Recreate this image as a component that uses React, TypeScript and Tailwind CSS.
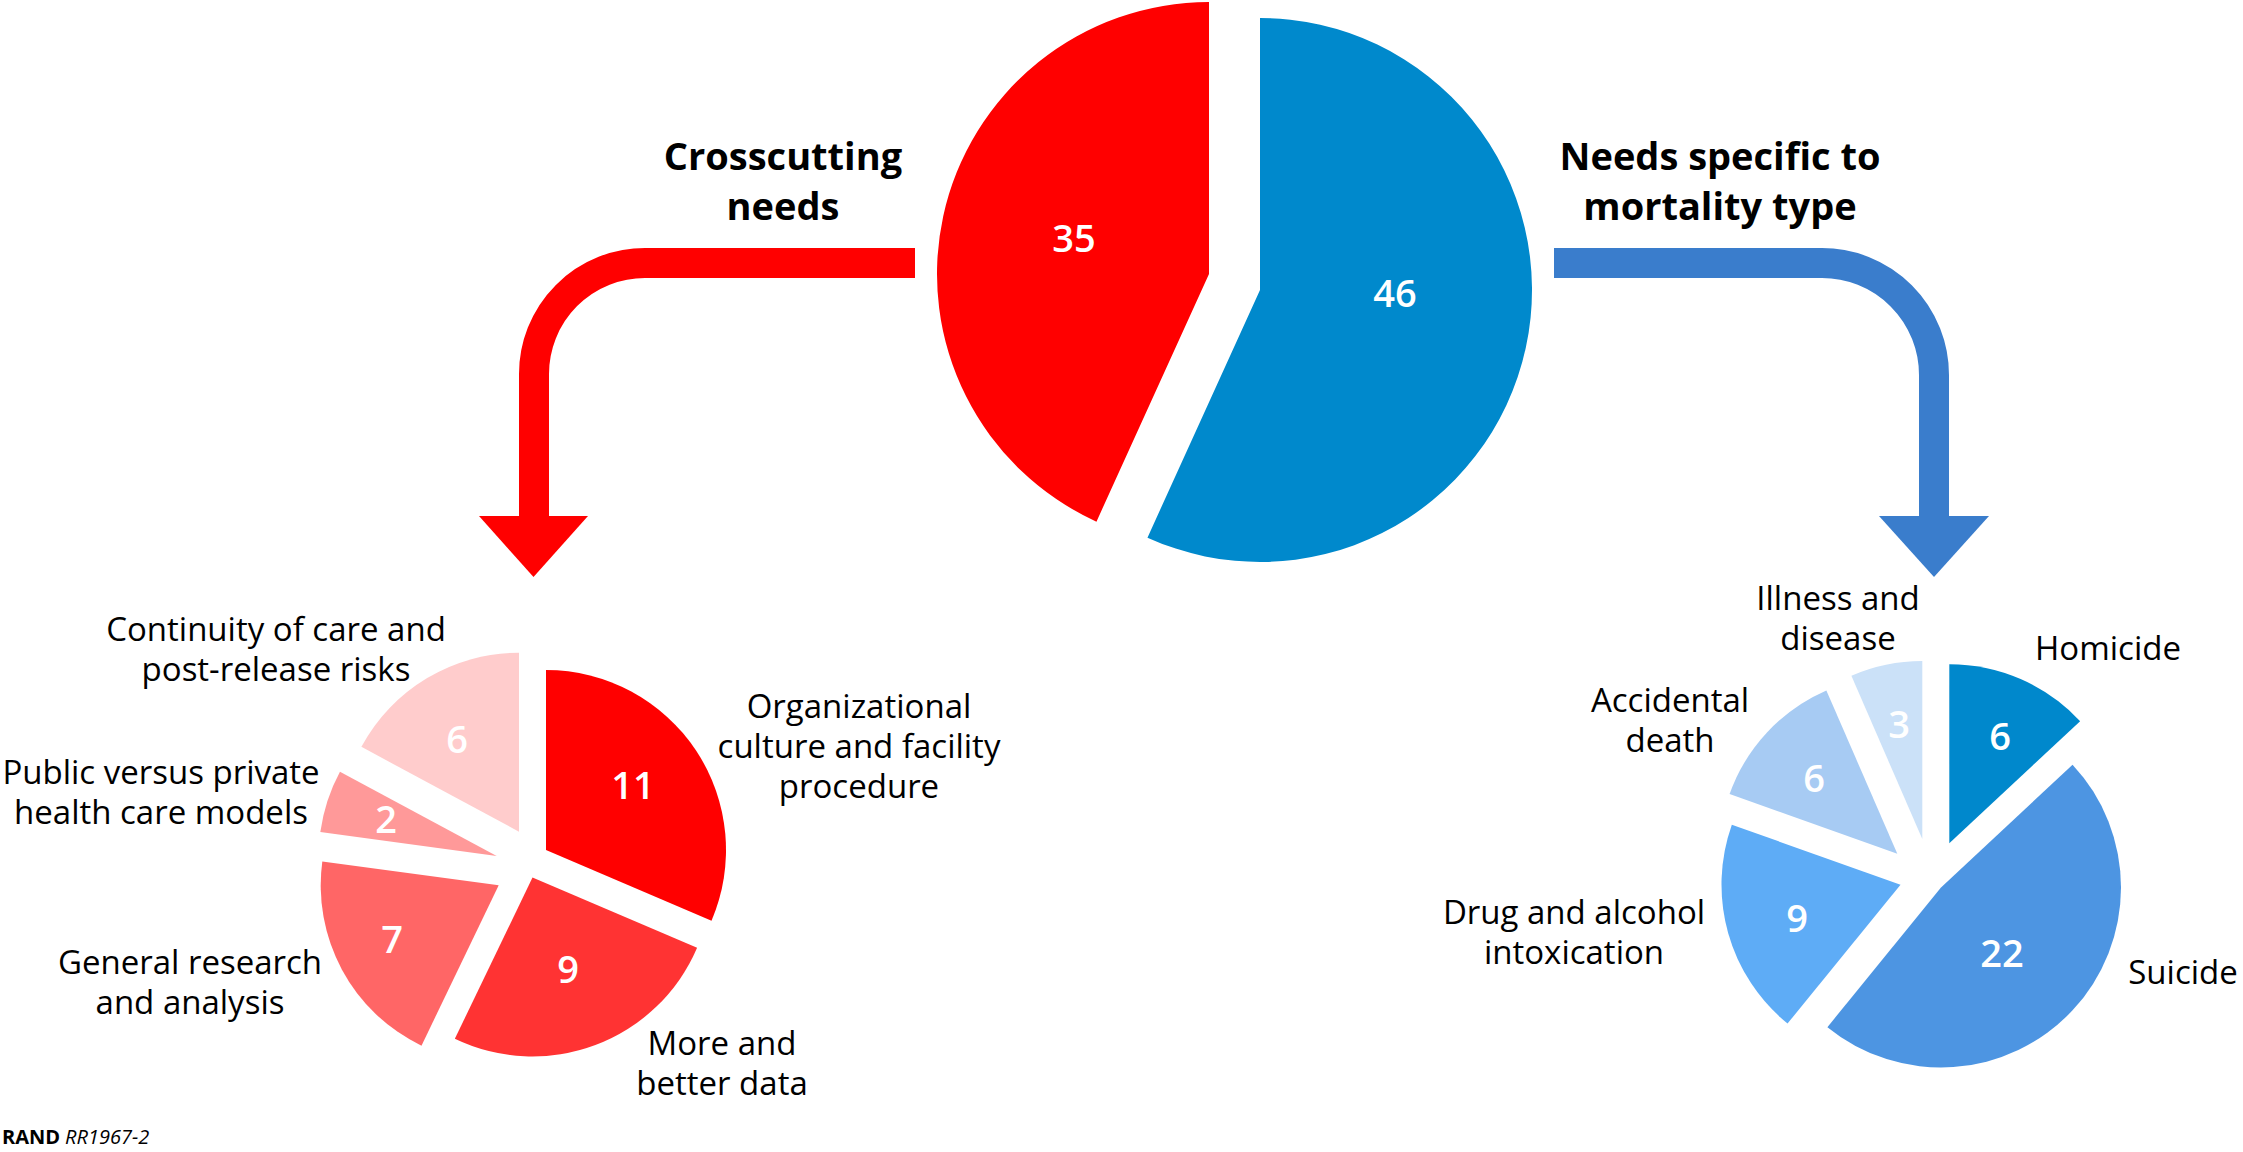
import React from "react";

type Slice = { cx: number; cy: number; r: number; a0: number; a1: number; fill: string };

function slicePath(s: Slice) {
  const rad = (d: number) => (d * Math.PI) / 180;
  const x0 = s.cx + s.r * Math.sin(rad(s.a0));
  const y0 = s.cy - s.r * Math.cos(rad(s.a0));
  const x1 = s.cx + s.r * Math.sin(rad(s.a1));
  const y1 = s.cy - s.r * Math.cos(rad(s.a1));
  const large = s.a1 - s.a0 > 180 ? 1 : 0;
  return `M ${s.cx} ${s.cy} L ${x0} ${y0} A ${s.r} ${s.r} 0 ${large} 1 ${x1} ${y1} Z`;
}

const slices: Slice[] = [
  // main pie
  { cx: 1209, cy: 274, r: 272, a0: 204.44, a1: 360, fill: "#ff0000" },
  { cx: 1260, cy: 290, r: 272, a0: 0, a1: 204.44, fill: "#0089cc" },
  // left pie (35)
  { cx: 546, cy: 850, r: 180, a0: 0, a1: 113.14, fill: "#ff0000" },
  { cx: 532.5, cy: 877.5, r: 179, a0: 113.14, a1: 205.71, fill: "#ff3333" },
  { cx: 498.7, cy: 885.3, r: 178, a0: 205.71, a1: 277.71, fill: "#ff6666" },
  { cx: 496.7, cy: 856, r: 178, a0: 277.71, a1: 298.29, fill: "#ff9999" },
  { cx: 519, cy: 831.7, r: 179, a0: 298.29, a1: 360, fill: "#ffcccc" },
  // right pie (46)
  { cx: 1949.3, cy: 843.3, r: 179, a0: 0, a1: 46.96, fill: "#0088cc" },
  { cx: 1941, cy: 887.5, r: 180, a0: 46.96, a1: 219.13, fill: "#4d95e2" },
  { cx: 1900.5, cy: 884.7, r: 179, a0: 219.13, a1: 289.57, fill: "#5eacf6" },
  { cx: 1897.3, cy: 853.7, r: 178, a0: 289.57, a1: 336.52, fill: "#a7cbf3" },
  { cx: 1922.3, cy: 839, r: 178, a0: 336.52, a1: 360, fill: "#cbe1f8" },
];

const numbers: { x: number; y: number; t: string }[] = [
  { x: 1074, y: 237, t: "35" },
  { x: 1395, y: 292, t: "46" },
  { x: 633, y: 784, t: "11" },
  { x: 568, y: 968, t: "9" },
  { x: 392, y: 938, t: "7" },
  { x: 386, y: 818, t: "2" },
  { x: 457, y: 738, t: "6" },
  { x: 2000, y: 735, t: "6" },
  { x: 2002, y: 952, t: "22" },
  { x: 1797, y: 917, t: "9" },
  { x: 1814, y: 777, t: "6" },
  { x: 1899, y: 723, t: "3" },
];

function Chart() {
  return (
    <svg className="absolute inset-0" width={2243} height={1152} viewBox="0 0 2243 1152">
      {/* red arrow */}
      <path
        d="M 915 263 L 645 263 A 111 111 0 0 0 534 374 L 534 520"
        fill="none"
        stroke="#ff0000"
        strokeWidth={30}
      />
      <polygon points="479,516 588,516 533.5,577" fill="#ff0000" />
      {/* blue arrow */}
      <path
        d="M 1554 263 L 1822 263 A 112 112 0 0 1 1934 375 L 1934 520"
        fill="none"
        stroke="#3a7dcc"
        strokeWidth={30}
      />
      <polygon points="1879,516 1989,516 1934,577" fill="#3a7dcc" />
      {slices.map((s, i) => (
        <path key={i} d={slicePath(s)} fill={s.fill} />
      ))}
      {numbers.map((n, i) => (
        <text
          key={i}
          x={n.x}
          y={n.y}
          textAnchor="middle"
          dominantBaseline="central"
          fill="#ffffff"
          fontSize={38}
          fontWeight={600}
          fontFamily="'Open Sans', 'Noto Sans', sans-serif"
        >
          {n.t}
        </text>
      ))}
    </svg>
  );
}

function Label({ pos, lines }: { pos: string; lines: string[] }) {
  return (
    <div
      className={`absolute ${pos} -translate-x-1/2 flex flex-col items-center whitespace-nowrap text-center text-[33px]`}
    >
      {lines.map((l) => (
        <div key={l} className="h-[40px] leading-[40px]">
          {l}
        </div>
      ))}
    </div>
  );
}

function Title({ pos, lines }: { pos: string; lines: string[] }) {
  return (
    <div
      className={`absolute ${pos} -translate-x-1/2 flex flex-col items-center whitespace-nowrap text-center text-[38px] font-bold`}
    >
      {lines.map((l) => (
        <div key={l} className="h-[50px] leading-[50px]">
          {l}
        </div>
      ))}
    </div>
  );
}

export default function App() {
  return (
    <div className="relative w-[2243px] h-[1152px] overflow-hidden bg-white text-black font-['Open_Sans','Noto_Sans',sans-serif]">
      <Chart />

      <Title pos="left-[783px] top-[130px]" lines={["Crosscutting", "needs"]} />
      <Title pos="left-[1720px] top-[130px]" lines={["Needs specific to", "mortality type"]} />

      <Label pos="left-[276px] top-[609px]" lines={["Continuity of care and", "post-release risks"]} />
      <Label pos="left-[161px] top-[752px]" lines={["Public versus private", "health care models"]} />
      <Label pos="left-[190px] top-[942px]" lines={["General research", "and analysis"]} />
      <Label
        pos="left-[859px] top-[686px]"
        lines={["Organizational", "culture and facility", "procedure"]}
      />
      <Label pos="left-[722px] top-[1023px]" lines={["More and", "better data"]} />

      <Label pos="left-[1838px] top-[578px]" lines={["Illness and", "disease"]} />
      <Label pos="left-[2108px] top-[628px]" lines={["Homicide"]} />
      <Label pos="left-[1670px] top-[680px]" lines={["Accidental", "death"]} />
      <Label pos="left-[1574px] top-[892px]" lines={["Drug and alcohol", "intoxication"]} />
      <Label pos="left-[2183px] top-[952px]" lines={["Suicide"]} />

      <div className="absolute left-[2px] top-[1125px] flex gap-[5px] whitespace-nowrap text-[20px] leading-[24px]">
        <span className="font-bold">RAND</span>
        <span className="italic">RR1967-2</span>
      </div>
    </div>
  );
}
